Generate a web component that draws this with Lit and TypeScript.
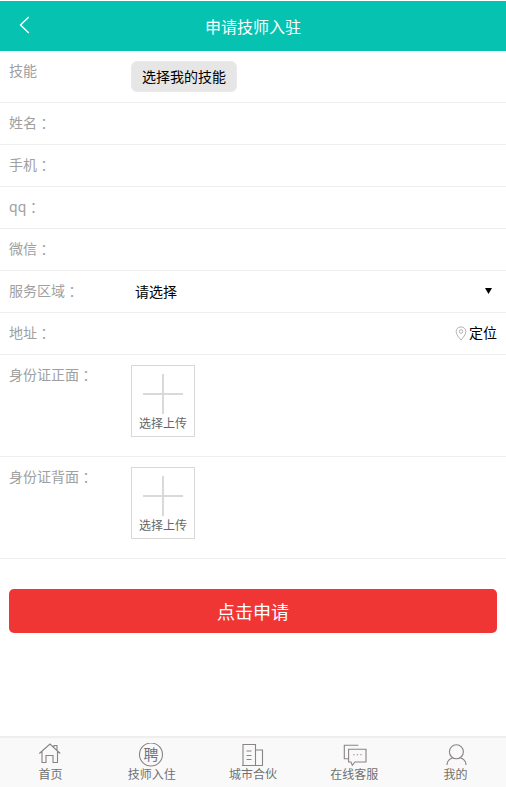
import { LitElement, html, css } from "lit";
import { customElement } from "lit/decorators.js";

@customElement("app-root")
export class AppRoot extends LitElement {
  static styles = css`
    :host {
      display: flex;
      flex-direction: column;
      width: 506px;
      height: 787px;
      overflow: hidden;
      background: #fff;
      font-family: "Noto Sans CJK SC", "Noto Sans", sans-serif;
      font-size: 14px;
      color: #000;
    }
    .header {
      margin-top: 1px;
      height: 50px;
      flex: none;
      background: #06c2b1;
      color: #fff;
      font-size: 16px;
      display: flex;
      align-items: center;
      justify-content: center;
      position: relative;
    }
    .back {
      position: absolute;
      left: 18px;
      top: 15px;
      width: 12px;
      height: 18px;
    }
    .row {
      flex: none;
      box-sizing: border-box;
      height: 42px;
      border-bottom: 1px solid #eee;
      padding: 0 9px;
      display: flex;
      align-items: flex-start;
    }
    .label {
      width: 122px;
      flex: none;
      color: #a0a0a0;
      line-height: 20px;
      padding-top: 9px;
    }
    .colon {
      display: inline-block;
      font-family: "Noto Sans CJK TC", sans-serif;
      transform: translateY(1px);
    }
    .skills {
      height: 52px;
    }
    .pick {
      margin-top: 10px;
      box-sizing: border-box;
      width: 106px;
      height: 31px;
      border-radius: 6px;
      border: 1px solid #eaeaea;
      background: #e6e6e6;
      font-size: 14px;
      line-height: 29px;
      text-align: center;
    }
    .select {
      flex: 1;
      display: flex;
      justify-content: space-between;
      padding: 10px 5px 0 4px;
      line-height: 20px;
    }
    .arrow {
      width: 7px;
      height: 6px;
      margin-top: 7px;
    }
    .locate {
      margin-left: auto;
      display: flex;
      align-items: center;
      gap: 2px;
      padding-top: 9px;
      line-height: 20px;
    }
    .pin {
      width: 12px;
      height: 15px;
      margin-top: 3px;
    }
    .id {
      height: 102px;
    }
    .upload {
      margin-top: 10px;
      box-sizing: border-box;
      width: 64px;
      height: 72px;
      border: 1px solid #d8d8d8;
      display: flex;
      flex-direction: column;
      align-items: center;
    }
    .plus {
      width: 40px;
      height: 40px;
      margin-top: 8px;
      flex: none;
    }
    .upload span {
      font-size: 12px;
      line-height: 16px;
      color: #666;
      margin-top: 1px;
    }
    .submit {
      flex: none;
      margin: 30px 9px 0;
      height: 44px;
      border-radius: 5px;
      background: #f03535;
      color: #fff;
      font-size: 18px;
      display: flex;
      align-items: center;
      justify-content: center;
    }
    .tabs {
      margin-top: auto;
      flex: none;
      box-sizing: border-box;
      height: 51px;
      border-top: 2px solid #eee;
      background: #f9f9f9;
      display: grid;
      grid-template-columns: repeat(5, 1fr);
    }
    .tab {
      display: flex;
      flex-direction: column;
      align-items: center;
      color: #707070;
      font-size: 12px;
      line-height: 16px;
      padding-top: 5px;
    }
    .tab svg {
      width: 26px;
      height: 24px;
      flex: none;
      display: block;
      margin-left: -1px;
    }
    .tab span {
      margin-top: -1px;
    }
    .ico {
      fill: none;
      stroke: #8a8482;
      stroke-width: 1.1;
    }
    .ico-text {
      font-size: 15px;
      fill: #70757a;
      stroke: none;
      text-anchor: middle;
    }
  `;

  private label(text: string) {
    return html`<div class="label">${text}<span class="colon">：</span></div>`;
  }

  private row(text: string) {
    return html`<div class="row">${this.label(text)}</div>`;
  }

  private idRow(text: string) {
    return html`<div class="row id">
      ${this.label(text)}
      <div class="upload">
        <svg class="plus" viewBox="0 0 40 40">
          <rect x="0" y="19" width="40" height="2" fill="#d9d9d9"></rect>
          <rect x="19" y="0" width="2" height="40" fill="#d9d9d9"></rect>
        </svg>
        <span>选择上传</span>
      </div>
    </div>`;
  }

  render() {
    return html`
      <div class="header">
        <svg class="back" viewBox="0 0 12 18">
          <path d="M10.8 1 L2.5 9 L10.8 17" fill="none" stroke="#fff" stroke-width="1.4"></path>
        </svg>
        申请技师入驻
      </div>
      <div class="row skills">
        <div class="label">技能</div>
        <div class="pick">选择我的技能</div>
      </div>
      ${this.row("姓名")}
      ${this.row("手机")}
      ${this.row("qq")}
      ${this.row("微信")}
      <div class="row">
        ${this.label("服务区域")}
        <div class="select">
          <span>请选择</span>
          <svg class="arrow" viewBox="0 0 7 6"><path d="M0 0 H7 L3.5 6 Z" fill="#000"></path></svg>
        </div>
      </div>
      <div class="row">
        ${this.label("地址")}
        <div class="locate">
          <svg class="pin" viewBox="0 0 13 17">
            <path d="M6.5 1 C3.3 1 1 3.4 1 6.4 C1 9.6 4.4 13.4 6.5 16 C8.6 13.4 12 9.6 12 6.4 C12 3.4 9.7 1 6.5 1 Z" fill="none" stroke="#a8a8a8"></path>
            <circle cx="6.5" cy="6.3" r="2" fill="none" stroke="#a8a8a8"></circle>
          </svg>
          定位
        </div>
      </div>
      ${this.idRow("身份证正面")}
      ${this.idRow("身份证背面")}
      <div class="submit">点击申请</div>
      <div class="tabs">
        <div class="tab">
          <svg viewBox="0 0 26 24">
            <path class="ico" d="M2.3 10.5 L13 1 L23.2 10.5 M5 8 V19.5 H9 V12.5 H16 V19.5 H20.5 V8 M17 4 V2.5 H20 V7"></path>
          </svg>
          <span>首页</span>
        </div>
        <div class="tab">
          <svg viewBox="0 0 26 24">
            <circle class="ico" cx="13" cy="11.5" r="11.5"></circle>
            <text class="ico-text" x="13" y="17">聘</text>
          </svg>
          <span>技师入住</span>
        </div>
        <div class="tab">
          <svg viewBox="0 0 26 24">
            <path class="ico" d="M4 22.5 V1.5 H16.5 V22.5 M16.5 7 H23.5 V22.5 M3 22.5 H24 M7.5 8 H12.5 M7.5 12.5 H12.5 M7.5 16.5 H12.5"></path>
          </svg>
          <span>城市合伙</span>
        </div>
        <div class="tab">
          <svg viewBox="0 0 26 24">
            <path class="ico" d="M17.3 2.3 H3.3 V15.7 H7.6 M7.6 6.3 H25 V19 H14 L11.3 22.3 L10 19 H7.6 Z"></path>
            <path class="ico" d="M12.3 11.8 H13.6 M15.8 11.8 H17.1 M19.3 11.8 H20.6"></path>
          </svg>
          <span>在线客服</span>
        </div>
        <div class="tab">
          <svg viewBox="0 0 26 24">
            <circle class="ico" cx="14.4" cy="8.8" r="7"></circle>
            <path class="ico" d="M5 22 C5 18 8 15.5 10.5 15 M18.5 15 C21 15.5 24 18 24 22"></path>
          </svg>
          <span>我的</span>
        </div>
      </div>
    `;
  }
}
